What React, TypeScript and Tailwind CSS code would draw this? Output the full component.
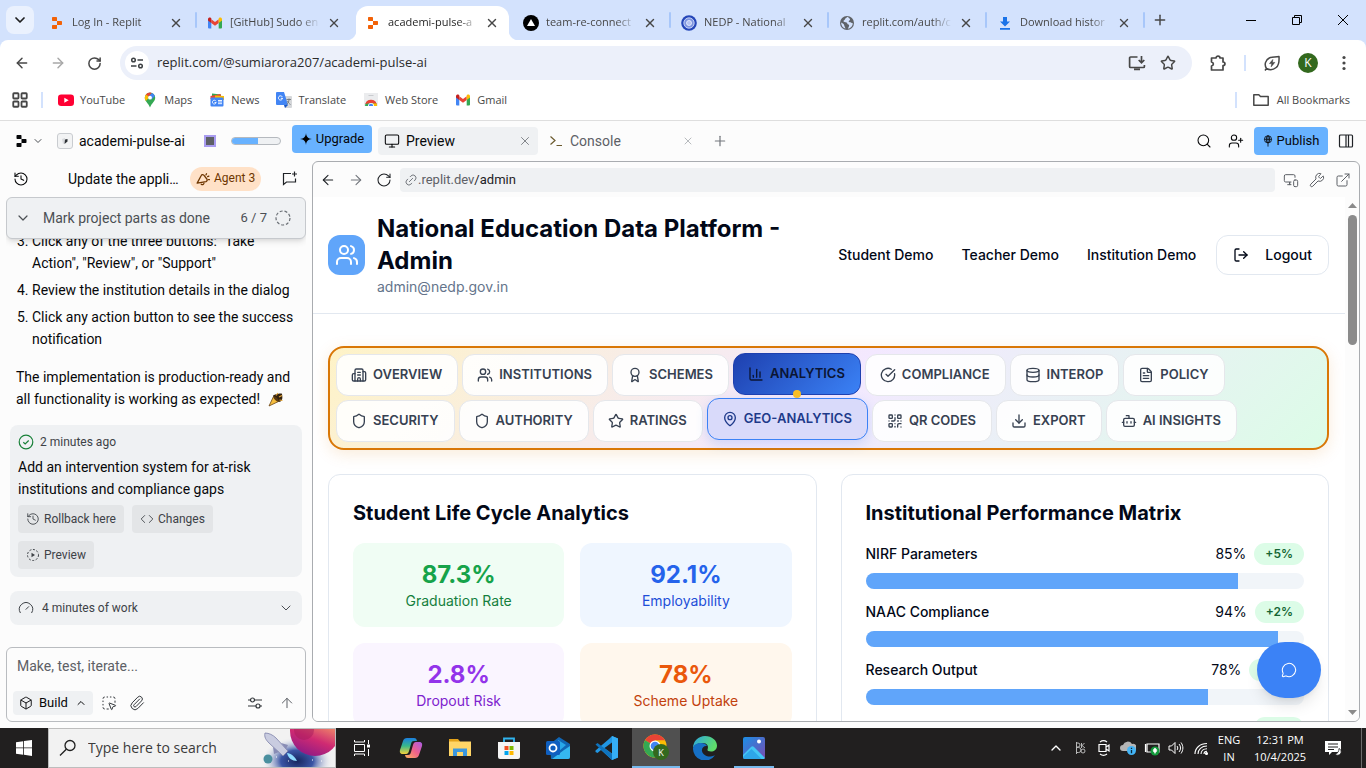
import React from "react";
import {
  ArrowLeft, ArrowRight, ArrowUp, Award, Bot, Box, Building2, ChartColumn, ChevronDown, ChevronUp,
  CircleCheckBig, Code, Database, Download, ExternalLink, FileText, Gauge, History, LayoutGrid, Link2,
  LogOut, MapPin, MessageCircle, Monitor, MonitorSmartphone, Paperclip, Plus, QrCode, RotateCw, Search, Shield,
  Star, SquareDashedMousePointer, UserPlus, Users, Wrench, X,
} from "lucide-react";

type SvgProps = { className?: string };

function ReplitLogo({ className }: SvgProps) {
  return (
    <svg viewBox="0 0 24 24" className={className} fill="currentColor" aria-hidden="true">
      <path d="M2 1.5A1.5 1.5 0 0 1 3.5 0h7A1.5 1.5 0 0 1 12 1.5V8H3.5A1.5 1.5 0 0 1 2 6.5ZM12 8h8.5A1.5 1.5 0 0 1 22 9.5v5a1.5 1.5 0 0 1-1.5 1.5H12ZM2 17.5A1.5 1.5 0 0 1 3.5 16H12v6.5a1.5 1.5 0 0 1-1.5 1.5h-7A1.5 1.5 0 0 1 2 22.5Z" />
    </svg>
  );
}

function GmailLogo() {
  return (
    <svg viewBox="0 0 16 16" className="size-4" aria-hidden="true">
      <path d="M1 4v8.500a1 1 0 0 0 1 1h2.300V6.500z" fill="#4285f4" />
      <path d="M15 4v8.500a1 1 0 0 1-1 1h-2.300V6.500z" fill="#34a853" />
      <path d="M4.300 4.200L8 7l3.700-2.800V8L8 10.700 4.300 8z" fill="#ea4335" />
      <path d="M1 4.300C1 2.700 2.700 2 4 3l.300.200V8L1 5.500z" fill="#c5221f" />
      <path d="M15 4.300C15 2.700 13.300 2 12 3l-.300.200V8L15 5.500z" fill="#fbbc04" />
    </svg>
  );
}

function VercelLogo() {
  return (
    <svg viewBox="0 0 16 16" className="size-4" aria-hidden="true">
      <circle cx="8" cy="8" r="8" />
      <path d="M8 4l4 7H4z" fill="#fff" />
    </svg>
  );
}

function EmblemLogo() {
  return (
    <svg viewBox="0 0 16 16" className="size-4" aria-hidden="true">
      <circle cx="8" cy="8" r="7.800" fill="#2546b8" />
      <circle cx="8" cy="8" r="5.200" fill="#7f95df" stroke="#dbe4ff" strokeWidth="0.800" />
      <circle cx="8" cy="8" r="2.500" fill="#b4c2f2" stroke="#eef2ff" strokeWidth="0.800" />
    </svg>
  );
}

function GlobeLogo() {
  return (
    <svg viewBox="0 0 16 16" className="size-4" aria-hidden="true">
      <circle cx="8" cy="8" r="7" fill="#5f6368" />
      <path d="M8.500 1.800c-1 1.200-2.200 1.200-2.500 2.500-.200 1-1.500.700-1.500 2 0 .900 2 .700 3 1.200 1.200.600.500 1.800 2 2 1.300.200.500 2.300-.700 4.300 2.700-.300 5-2.800 5-5.500-1.200-.300-1.800-1-3-1-1.300 0-1.500-1.300-.500-1.700 1-.300 1-1.500 0-2.300-.700-.600-1-1-1.800-1.500zM2.200 7.500c1 .500 2.500 1.200 2.800 2.200.300 1.200.800 2 1.500 3.800-2.500-.600-4.500-3-4.300-6z" fill="#d3e2fd" />
    </svg>
  );
}

function DownloadLogo() {
  return (
    <svg viewBox="0 0 16 16" className="size-4" fill="#1a73e8" aria-hidden="true">
      <path d="M6 2h4v4.500h3L8 11.500l-5-5h3zM3 13h10v1.700H3z" />
    </svg>
  );
}

function TuneIcon() {
  return (
    <svg viewBox="0 0 16 16" className="size-4" fill="none" stroke="#3c4043" strokeWidth="1.500" aria-hidden="true">
      <circle cx="4.500" cy="5" r="1.800" /><path d="M8.500 5H14M2 11h5.500" /><circle cx="11.500" cy="11" r="1.800" />
    </svg>
  );
}

function InstallIcon() {
  return (
    <svg viewBox="0 0 18 18" className="size-[18px]" fill="none" stroke="#474747" strokeWidth="1.700" aria-hidden="true">
      <path d="M9.500 3H2.600a1 1 0 0 0-1 1v8.500a1 1 0 0 0 1 1h12.800a1 1 0 0 0 1-1V11M13.500 2v6.500M10.700 6l2.800 2.800L16.300 6M6 15.300h6" />
    </svg>
  );
}

function PuzzleIcon() {
  return (
    <svg viewBox="0 0 18 18" className="size-[18px]" fill="none" stroke="#474747" strokeWidth="1.700" strokeLinejoin="round" aria-hidden="true">
      <path d="M2.500 4H7c0-2.500 4-2.500 4 0h3v4c2.600 0 2.600 3.500 0 3.500V16H2.500v-4c2.500-.500 2.500-3.500 0-4z" />
    </svg>
  );
}

function LeafIcon() {
  return (
    <svg viewBox="0 0 18 18" className="size-[18px]" fill="none" stroke="#474747" strokeWidth="1.500" strokeLinejoin="round" aria-hidden="true">
      <path d="M3.500 14.500C1 11 2.300 5.800 6.300 4 9 2.800 12.500 3.300 16 2.500c.300 4.500.100 8.500-2.800 11-2.900 2.400-7 2.500-9.700 1zm0 0L2 16.500" />
      <path d="M9.800 5.500L6.500 9.600h2.300l-.600 3.200 3.600-4.400H9.400z" fill="#474747" strokeWidth="0.600" />
    </svg>
  );
}

function YoutubeLogo() {
  return (
    <svg viewBox="0 0 16 16" className="size-4" aria-hidden="true">
      <rect y="2.500" width="16" height="11.500" rx="3.200" fill="#ff0033" /><path d="M6.300 5.700l4.400 2.500-4.400 2.500z" fill="#fff" />
    </svg>
  );
}

function MapsLogo() {
  return (
    <svg viewBox="0 0 16 16" className="size-4" aria-hidden="true">
      <path d="M8 .500A5.200 5.200 0 0 0 2.800 5.700c0 4 3.500 5 5.200 9.800 1.700-4.800 5.200-5.800 5.200-9.800A5.200 5.200 0 0 0 8 .500z" fill="#34a853" />
      <path d="M8 .500a5.200 5.200 0 0 0-4.100 2L6 5l4-4.100A5 5 0 0 0 8 .500z" fill="#ea4335" />
      <path d="M3.900 2.500a5.200 5.200 0 0 0-1.100 3.200c0 1.400.500 2.400 1.100 3.300L7.500 5z" fill="#fbbc04" />
      <path d="M10 .900a5.200 5.200 0 0 1 2.900 3L9.500 7.500 6.400 4.700z" fill="#4285f4" />
      <circle cx="8" cy="5.700" r="1.900" fill="#fff" />
    </svg>
  );
}

function NewsLogo() {
  return (
    <svg viewBox="0 0 16 16" className="size-4" aria-hidden="true">
      <path d="M3 1.500l9 1v4H3z" fill="#34a853" /><path d="M1.500 4l10-2 1 5h-11z" fill="#ea4335" /><path d="M6 3.500l9 .500v4H6z" fill="#fbbc04" />
      <rect x="1.500" y="5.500" width="13" height="9" rx="1" fill="#4285f4" />
      <path d="M7 9.200a1.900 1.900 0 1 0 .200 1.300H5.500M9 8.500h4M9 10h4M9 11.700h4" stroke="#fff" fill="none" strokeWidth="0.900" />
    </svg>
  );
}

function TranslateLogo() {
  return (
    <svg viewBox="0 0 16 16" className="size-4" aria-hidden="true">
      <path d="M6 4h9a1 1 0 0 1 1 1v10a1 1 0 0 1-1 1H9z" fill="#d5d7da" />
      <path d="M1 0h7l4 13H1a1 1 0 0 1-1-1V1a1 1 0 0 1 1-1z" fill="#4285f4" /><path d="M8 13h4l-3 3z" fill="#1a56c4" />
      <path d="M6.300 4.800a2.100 2.100 0 1 0 .300 1.500H4.800" stroke="#fff" fill="none" strokeWidth="1" />
      <path d="M10.500 7.500H15M13 6.500v1c0 2-1 4-2.500 5M11.500 9c.500 1.500 2 3 3 3.500" stroke="#72787f" fill="none" strokeWidth="0.900" />
    </svg>
  );
}

function WebStoreLogo() {
  return (
    <svg viewBox="0 0 16 16" className="size-4" aria-hidden="true">
      <path d="M1 1h14v13H1z" fill="#ebecee" /><path d="M5.500 3.500h5" stroke="#c9cbcf" />
      <path d="M2 14a6 6 0 0 1 12 0z" fill="#34a853" /><path d="M2.300 12A6 6 0 0 1 13.700 12L8 11z" fill="#ea4335" />
      <path d="M9 11.500h4.700A6 6 0 0 1 14 14H9z" fill="#fbbc04" /><path d="M5 14a3 3 0 0 1 6 0z" fill="#fff" /><path d="M5.800 14a2.200 2.200 0 0 1 4.400 0z" fill="#4285f4" />
    </svg>
  );
}

function FolderIcon() {
  return (
    <svg viewBox="0 0 16 16" className="size-4" fill="none" stroke="#474747" strokeWidth="1.500" strokeLinejoin="round" aria-hidden="true">
      <path d="M.800 13.200V2.800h5l1.700 1.700h7.700v8.700z" />
    </svg>
  );
}

const TABS: { title: string; icon: React.ReactNode; active?: boolean; divider?: boolean }[] = [
  { title: "Log In - Replit", icon: <ReplitLogo className="size-3 text-[#f26207]" />, divider: true },
  { title: "[GitHub] Sudo en", icon: <GmailLogo /> },
  { title: "academi-pulse-a", icon: <ReplitLogo className="size-3 text-[#f26207]" />, active: true },
  { title: "team-re-connect", icon: <VercelLogo />, divider: true },
  { title: "NEDP - National", icon: <EmblemLogo />, divider: true },
  { title: "replit.com/auth/c", icon: <GlobeLogo />, divider: true },
  { title: "Download histor", icon: <DownloadLogo />, divider: true },
];

function TabStrip() {
  return (
    <div className="flex h-10 shrink-0 bg-[#d3e2fd] pl-1.5">
      <button aria-label="Search tabs" className="mt-1.5 mr-1.5 flex size-7 items-center justify-center rounded-lg bg-[#eaf1fe]">
        <ChevronDown className="size-4 text-[#1f1f1f]" strokeWidth={2.6} />
      </button>
      {TABS.map((t) => (
        <div key={t.title} className="relative flex w-[158px] min-w-0 items-end">
          <div className={"flex h-[34px] w-[153px] items-center pr-[9px] pb-px pl-[9px] text-[11px] " + (t.active ? "rounded-t-xl bg-white" : "")}>
            <span className="flex w-4 shrink-0 justify-center">{t.icon}</span>
            <span className={"ml-[7px] min-w-0 flex-1 overflow-hidden whitespace-nowrap [mask-image:linear-gradient(to_right,#000_78%,transparent)] " + (t.active ? "text-[#1f1f1f]" : "text-[#474747]")}>
              {t.title}
            </span>
            <button aria-label={"Close " + t.title} className="ml-1.5 flex size-4 shrink-0 items-center justify-center">
              <X className="size-3.5 text-[#474747]" strokeWidth={2.4} />
            </button>
          </div>
          {t.active && (
            <>
              <span className="absolute bottom-0 -left-2.5 size-2.5 bg-[radial-gradient(circle_at_0_0,#d3e2fd_10px,#fff_11px)]" />
              <span className="absolute right-[-5px] bottom-0 size-2.5 bg-[radial-gradient(circle_at_100%_0,#d3e2fd_10px,#fff_11px)]" />
            </>
          )}
          {t.divider && <span className="mb-3 ml-0.5 h-4 w-0.5 rounded bg-[#a8c7fa]" />}
        </div>
      ))}
      <button aria-label="New tab" className="flex w-7 items-center justify-center">
        <Plus className="size-4 text-[#474747]" strokeWidth={2.2} />
      </button>
      <div className="ml-auto flex">
        <button aria-label="Minimize" className="flex w-[46px] items-center justify-center"><span className="h-px w-2.5 bg-black" /></button>
        <button aria-label="Restore" className="flex w-[46px] items-center justify-center">
          <svg viewBox="0 0 10 10" className="size-2.5" fill="none" stroke="#000"><path d="M.500 2.500h7v7h-7zM2.500 2.500v-2h7v7h-2" /></svg>
        </button>
        <button aria-label="Close" className="flex w-[46px] items-center justify-center">
          <svg viewBox="0 0 10 10" className="size-2.5" fill="none" stroke="#000"><path d="M0 0l10 10M10 0L0 10" /></svg>
        </button>
      </div>
    </div>
  );
}

function Toolbar() {
  return (
    <div className="shrink-0 bg-[#d3e2fd]">
      <div className="flex h-[46px] items-center rounded-t-lg bg-white">
        <div className="flex w-[112px] justify-around pl-1">
          <button aria-label="Back"><ArrowLeft className="size-4 text-[#474747]" strokeWidth={2.2} /></button>
          <button aria-label="Forward"><ArrowRight className="size-4 text-[#a8a8a8]" strokeWidth={2.2} /></button>
          <button aria-label="Reload"><RotateCw className="size-[15px] text-[#474747]" strokeWidth={2.4} /></button>
        </div>
        <div className="ml-2 flex h-[34px] min-w-0 flex-1 items-center rounded-full bg-[#ecf0fa] pr-4 pl-[5px]">
          <button aria-label="Site information" className="flex size-6 items-center justify-center rounded-full bg-white"><TuneIcon /></button>
          <input aria-label="Address" defaultValue="replit.com/@sumiarora207/academi-pulse-ai" className="ml-2 min-w-0 flex-1 bg-transparent text-[13px] text-[#2b2b2b] outline-none" />
          <button aria-label="Install" className="mr-3.5"><InstallIcon /></button>
          <button aria-label="Bookmark"><Star className="size-4 text-[#474747]" strokeWidth={2.2} /></button>
        </div>
        <button aria-label="Extensions" className="ml-[17px]"><PuzzleIcon /></button>
        <span className="ml-[17px] h-4 w-0.5 bg-[#d3e2fd]" />
        <button aria-label="Energy saver" className="ml-[17px]"><LeafIcon /></button>
        <button className="ml-[17px] flex size-5 items-center justify-center rounded-full bg-[#33691e] text-xs text-white">K</button>
        <button aria-label="Menu" className="mr-3 ml-4 flex w-5 items-center justify-center">
          <svg viewBox="0 0 4 16" className="h-4 w-1" fill="#474747"><circle cx="2" cy="2.500" r="1.600" /><circle cx="2" cy="8" r="1.600" /><circle cx="2" cy="13.500" r="1.600" /></svg>
        </button>
      </div>
    </div>
  );
}

function Bookmarks() {
  const items: [string, React.ReactNode][] = [
    ["YouTube", <YoutubeLogo key="i" />], ["Maps", <MapsLogo key="i" />], ["News", <NewsLogo key="i" />],
    ["Translate", <TranslateLogo key="i" />], ["Web Store", <WebStoreLogo key="i" />], ["Gmail", <GmailLogo key="i" />],
  ];
  return (
    <nav className="flex h-[35px] shrink-0 items-center border-b border-[#dedede] bg-white pb-1.5 pl-[11px] text-[11px] text-[#474747]">
      <button aria-label="Apps"><LayoutGrid className="size-[18px]" strokeWidth={2.4} /></button>
      <span className="mr-[15px] ml-3 h-4 w-0.5 bg-[#d3e2fd]" />
      <div className="flex gap-[17px]">
        {items.map(([n, icon]) => (
          <a key={n} href="#" className="flex items-center gap-1.5">{icon}{n}</a>
        ))}
      </div>
      <span className="mr-4 ml-auto h-4 w-0.5 bg-[#d3e2fd]" />
      <a href="#" className="mr-4 flex items-center gap-2"><FolderIcon />All Bookmarks</a>
    </nav>
  );
}

function AppHeader() {
  return (
    <header className="flex h-10 shrink-0 items-center text-sm text-[#07080a]">
      <button aria-label="Replit menu" className="ml-[15px] flex items-center gap-1">
        <ReplitLogo className="h-3 w-[13px]" />
        <ChevronDown className="size-3 text-[#4b4f54]" />
      </button>
      <span className="ml-[13px] flex size-4 items-center justify-center rounded-[3px] border border-[#c9ccd0] bg-[#f2f3f4]">
        <svg viewBox="0 0 8 8" className="size-2"><path d="M1 2l3-1v5L2 7z" fill="#d8dadd" /><path d="M4 2.500L6.500 2v2.500L3.500 7z" fill="#2b2f33" /></svg>
      </span>
      <span className="ml-1.5 w-[111px] whitespace-nowrap">academi-pulse-ai</span>
      <button aria-label="Stop" className="ml-3.5 size-3 border-2 border-[#a99cf0] bg-[#5d6066]" />
      <span className="ml-[15px] h-2 w-[50px] overflow-hidden rounded-full border border-[#b5b9be] bg-[#eff1f3]">
        <span className="block h-full w-[55%] bg-[#68b2ff]" />
      </span>
      <button className="mb-1 ml-[11px] flex h-7 w-20 items-center justify-center gap-1 rounded bg-[#68b2ff] text-[13px]">
        <svg viewBox="0 0 12 12" className="size-3"><path d="M6 0c.400 4 2 5.600 6 6-4 .400-5.600 2-6 6-.400-4-2-5.600-6-6 4-.400 5.600-2 6-6z" /></svg>
        Upgrade
      </button>
      <div className="ml-1.5 flex h-7 w-40 items-center rounded bg-[#eff1f3] px-1.5">
        <Monitor className="size-4" strokeWidth={1.6} />
        <span className="ml-1.5">Preview</span>
        <button aria-label="Close Preview" className="ml-auto"><X className="size-3.5 text-[#72767c]" strokeWidth={1.5} /></button>
      </div>
      <div className="flex h-7 w-40 items-center pr-1 pl-3 text-[#5d6066]">
        <svg viewBox="0 0 12 12" className="size-3" fill="none" stroke="#6b5a2e" strokeWidth="1.200"><path d="M.500 1.500L5 5.500l-4.500 4M6.500 10.500H12" /></svg>
        <span className="ml-2">Console</span>
        <button aria-label="Close Console" className="ml-auto"><X className="size-3 text-[#a0a4a8]" strokeWidth={1.5} /></button>
      </div>
      <button aria-label="New pane" className="ml-3.5"><Plus className="size-4 text-[#72767c]" strokeWidth={1.8} /></button>
      <div className="mr-3 ml-auto flex items-center">
        <button aria-label="Search"><Search className="size-4" strokeWidth={1.6} /></button>
        <button aria-label="Invite" className="ml-4"><UserPlus className="size-4" strokeWidth={1.6} /></button>
        <button className="ml-2.5 flex h-7 w-[74px] items-center justify-center gap-1 rounded bg-[#68b2ff] text-[13px]">
          <svg viewBox="0 0 12 14" className="h-3 w-2.5" fill="none" stroke="#07080a"><circle cx="6" cy="5" r="4.300" /><ellipse cx="6" cy="5" rx="2" ry="4.300" /><path d="M1.700 5h8.600M6 .700v13" /></svg>
          Publish
        </button>
        <button aria-label="Toggle panel" className="ml-2.5">
          <svg viewBox="0 0 16 16" className="size-4" fill="none" stroke="#1f2226" strokeWidth="1.200"><rect x="1.500" y="2" width="13" height="12" rx="1" /><path d="M8 2v12M10.500 2v12" /></svg>
        </button>
      </div>
    </header>
  );
}

function AgentPanel() {
  const chip = "flex h-7 items-center gap-1 rounded bg-[#e3e5e7] px-2 text-[12px] text-[#3e4247]";
  return (
    <aside className="flex w-[312px] shrink-0 flex-col px-1.5 text-[#07080a]">
      <div className="flex h-9 shrink-0 items-center pl-[7px] text-sm">
        <button aria-label="History"><History className="size-4" strokeWidth={1.6} /></button>
        <span className="ml-[39px] w-[116px] truncate">Update the application</span>
        <span className="ml-1.5 flex h-6 items-center gap-1 rounded-full bg-[#ffe1c7] px-1.5 text-[12px] text-[#6e3600]">
          <svg viewBox="0 0 12 12" className="size-3.5" fill="none" stroke="currentColor" strokeWidth="1.100" strokeLinecap="round" strokeLinejoin="round"><path d="M1 9.500L4.500 3c.500-1 1.500-1 2.200-.300L9.300 6c.600 1 .300 1.800-.700 2.200zM4.500 10.500c1 .800 2 .300 2.300-.800M9 1.500l-.500 1M11 3.500l-1 .500M10.700 6.500h.800" /></svg>
          Agent 3
        </span>
        <button aria-label="New chat" className="mr-2 ml-auto">
          <svg viewBox="0 0 16 16" className="size-4" fill="none" stroke="#1f2226" strokeWidth="1.200"><path d="M9 2.500H1.500v11l3-2.500h9V7.500M12.500.500v5M10 3h5" /></svg>
        </button>
      </div>

      <div className="relative flex min-h-0 flex-1 flex-col justify-end overflow-hidden">
        <button className="absolute inset-x-0 top-0 z-10 flex h-[42px] items-center rounded-md border border-[#c6c9cd] bg-[#eff1f3] pr-3.5 pl-2 text-sm text-[#4b4f54] shadow-md">
          <ChevronDown className="size-4" strokeWidth={1.8} />
          <span className="ml-3">Mark project parts as done</span>
          <span className="ml-auto text-[13px]">6 / 7</span>
          <svg viewBox="0 0 16 16" className="ml-2 size-4 shrink-0" fill="none" stroke="#6b7076" strokeWidth="1.200" strokeDasharray="3 1.900"><circle cx="8" cy="8" r="7" /></svg>
        </button>
        <div className="pb-[22px]">
          <ol start={3} className="ml-[26px] list-decimal space-y-[5px] text-sm leading-[22px]">
            <li>Click any of the three buttons: "Take<br />Action", "Review", or "Support"</li>
            <li>Review the institution details in the dialog</li>
            <li>Click any action button to see the success notification</li>
          </ol>
          <p className="mt-4 ml-2.5 text-sm leading-[22px]">
            The implementation is production-ready and<br />all functionality is working as expected!{" "}
            <svg viewBox="0 0 16 16" className="ml-1 inline size-4 align-text-bottom" role="img" aria-label="party">
              <path d="M1 15L5.500 5.500l5 5z" fill="#f5bd3d" stroke="#6b4516" strokeWidth="0.800" />
              <path d="M5 5c1-2 9-3 9-2s2 7-3 8z" fill="#35230f" />
              <path d="M5.500 5.500c1-1.500 6.500 3.500 5 5-1.500 1-6-3.500-5-5z" fill="#5a3a12" />
              <path d="M8 4.500l2-2.500M11 6l3-1.500M11.500 9l3 .500" stroke="#e8a93a" strokeWidth="1.100" fill="none" />
            </svg>
          </p>
          <section className="mx-1 mt-[15px] rounded-lg bg-[#eff1f3] p-2">
            <div className="flex items-center gap-1.5 text-[12px] leading-[18px] text-[#3e4247]">
              <svg viewBox="0 0 16 16" className="size-4" fill="none" stroke="#188038" strokeWidth="1.200"><circle cx="8" cy="8" r="6.800" /><path d="M5.300 8.200l1.900 1.800 3.500-3.500" /></svg>
              2 minutes ago
            </div>
            <p className="mt-[5px] text-sm leading-[22px]">Add an intervention system for at-risk institutions and compliance gaps</p>
            <div className="mt-[5px] flex flex-wrap gap-2">
              <button className={chip}><History className="size-3.5" strokeWidth={1.5} />Rollback here</button>
              <button className={chip}><Code className="size-3.5" strokeWidth={1.5} />Changes</button>
              <button className={chip}>
                <svg viewBox="0 0 14 14" className="size-3.5" fill="none" stroke="currentColor" strokeDasharray="2 1.600"><circle cx="7" cy="7" r="5.500" /><path d="M5.500 4.800L9 7 5.500 9.200z" fill="currentColor" stroke="none" /></svg>
                Preview
              </button>
            </div>
          </section>
          <button className="mx-1 mt-3.5 flex h-[34px] w-[292px] items-center gap-2 rounded-lg bg-[#eff1f3] px-2 text-[12px] text-[#3e4247]">
            <Gauge className="size-4" strokeWidth={1.5} />4 minutes of work
            <ChevronDown className="ml-auto size-4" strokeWidth={1.4} />
          </button>
        </div>
      </div>

      <div className="mb-1.5 flex h-[75px] w-[300px] shrink-0 flex-col justify-between rounded-md border border-[#b9bcc0] bg-[#fcfcfc] p-1.5">
        <textarea aria-label="Message" placeholder="Make, test, iterate..." rows={1} className="resize-none bg-transparent px-1 pt-0.5 text-sm outline-none placeholder:text-[#5d6066]" />
        <div className="flex h-6 items-center text-[#33373b]">
          <button className="flex h-6 w-20 items-center rounded bg-[#eff1f3] px-1.5 text-[13px] text-[#07080a]">
            <Box className="size-3.5" strokeWidth={1.6} /><span className="ml-1.5">Build</span><ChevronUp className="ml-auto size-3" />
          </button>
          <button aria-label="Select element" className="ml-2"><SquareDashedMousePointer className="size-4" strokeWidth={1.5} /></button>
          <button aria-label="Attach" className="ml-3"><Paperclip className="size-4" strokeWidth={1.5} /></button>
          <button aria-label="Settings" className="mr-4 ml-auto">
            <svg viewBox="0 0 16 16" className="size-4" fill="none" stroke="currentColor" strokeWidth="1.200"><path d="M1 5h2.500M7.500 5H15M1 11h8M13 11h2" /><circle cx="5.500" cy="5" r="2" /><circle cx="11" cy="11" r="2" /></svg>
          </button>
          <button aria-label="Send" className="mr-1"><ArrowUp className="size-4 text-[#5d6066]" strokeWidth={1.5} /></button>
        </div>
      </div>
    </aside>
  );
}

const NAV = [
  { label: "OVERVIEW", Icon: Building2 }, { label: "INSTITUTIONS", Icon: Users }, { label: "SCHEMES", Icon: Award },
  { label: "ANALYTICS", Icon: ChartColumn }, { label: "COMPLIANCE", Icon: CircleCheckBig }, { label: "INTEROP", Icon: Database },
  { label: "POLICY", Icon: FileText }, { label: "SECURITY", Icon: Shield }, { label: "AUTHORITY", Icon: Shield },
  { label: "RATINGS", Icon: Star }, { label: "GEO-ANALYTICS", Icon: MapPin }, { label: "QR CODES", Icon: QrCode },
  { label: "EXPORT", Icon: Download }, { label: "AI INSIGHTS", Icon: Bot },
];

function DashboardNav() {
  return (
    <nav className="flex flex-wrap gap-1 rounded-2xl border-2 border-[#d97706] bg-[linear-gradient(135deg,#fef3c7_0%,#f3e8ff_50%,#dcfce7_100%)] p-1.5 shadow-[0_4px_16px_rgba(217,119,6,0.15)]">
      {NAV.map(({ label, Icon }) => {
        const base = "relative flex h-[42px] items-center gap-1.5 rounded-xl border pr-[15px] pl-3.5 text-[13px] font-semibold ";
        const look =
          label === "ANALYTICS"
            ? "-mt-px mb-px border-[#1e40af] bg-[linear-gradient(135deg,#1e40af,#3b82f6)] text-[#0b1533]"
            : label === "GEO-ANALYTICS"
              ? "-mt-0.5 mb-0.5 border-[#3b82f6] bg-[#d9dafa] text-[#1e3a8a] shadow-[0_4px_12px_rgba(59,130,246,0.2)]"
              : "border-[#e5e7eb] bg-white/90 text-[#374151]";
        return (
          <button key={label} className={base + look}>
            <Icon className="size-4" />
            {label}
            {label === "ANALYTICS" && <span className="absolute -bottom-1 left-1/2 size-2 -translate-x-1/2 rounded-full bg-[#fbbf24]" />}
          </button>
        );
      })}
    </nav>
  );
}

const STATS = [
  { value: "87.3%", label: "Graduation Rate", box: "bg-[#f0fdf4]", v: "text-[#16a34a]", l: "text-[#15803d]" },
  { value: "92.1%", label: "Employability", box: "bg-[#eff6ff]", v: "text-[#2563eb]", l: "text-[#1d4ed8]" },
  { value: "2.8%", label: "Dropout Risk", box: "bg-[#faf5ff]", v: "text-[#9333ea]", l: "text-[#7e22ce]" },
  { value: "78%", label: "Scheme Uptake", box: "bg-[#fff7ed]", v: "text-[#ea580c]", l: "text-[#c2410c]" },
];

const METRICS = [
  { name: "NIRF Parameters", value: 85, delta: "+5%" },
  { name: "NAAC Compliance", value: 94, delta: "+2%" },
  { name: "Research Output", value: 78, delta: "+12%" },
  { name: "Industry Linkage", value: 72, delta: "+8%" },
];

function Dashboard() {
  return (
    <div className="min-w-0 flex-1 overflow-hidden bg-white font-['Inter','Liberation_Sans',sans-serif] text-[#020817]">
      <header className="flex items-center border-b border-[#e2e8f0] py-4 pr-4 pl-[15px] text-sm">
        <span className="flex h-10 w-[37px] shrink-0 items-center justify-center rounded-xl bg-[#60a5fa] text-white"><Users className="size-6" /></span>
        <div className="ml-3 min-w-0 flex-1">
          <h1 className="text-2xl font-bold">National Education Data Platform - Admin</h1>
          <p className="text-[#64748b]">admin@nedp.gov.in</p>
        </div>
        <div className="ml-6 flex shrink-0 items-center gap-2 font-medium">
          <a href="#" className="px-2.5">Student Demo</a>
          <a href="#" className="px-2.5">Teacher Demo</a>
          <a href="#" className="px-2.5">Institution Demo</a>
          <button className="ml-0.5 flex h-10 items-center gap-4 rounded-xl border border-[#e2e8f0] px-4"><LogOut className="size-4" />Logout</button>
        </div>
      </header>
      <main className="pt-8 pr-4 pl-[15px]">
        <DashboardNav />
        <div className="mt-6 grid grid-cols-2 gap-6">
          <section className="rounded-xl border border-[#e2e8f0] p-6">
            <h2 className="text-xl font-bold">Student Life Cycle Analytics</h2>
            <div className="mt-4 grid grid-cols-2 gap-4 text-center">
              {STATS.map((s) => (
                <div key={s.label} className={"rounded-xl p-4 " + s.box}>
                  <div className={"text-2xl font-bold " + s.v}>{s.value}</div>
                  <div className={"text-sm " + s.l}>{s.label}</div>
                </div>
              ))}
            </div>
          </section>
          <section className="rounded-xl border border-[#e2e8f0] p-6">
            <h2 className="text-xl font-bold">Institutional Performance Matrix</h2>
            <div className="mt-4 space-y-3">
              {METRICS.map((m) => (
                <div key={m.name}>
                  <div className="flex h-[22px] items-center text-sm">
                    <span className="font-medium">{m.name}</span>
                    <span className="ml-auto">{m.value}%</span>
                    <span className="ml-2 flex h-[22px] items-center rounded-full bg-[#dcfce7] px-[11px] text-xs font-semibold text-[#166534]">{m.delta}</span>
                  </div>
                  <div className="mt-2 h-4 overflow-hidden rounded-full bg-[#f1f5f9]">
                    <div className="h-full bg-[#60a5fa]" style={{ width: `${m.value}%` }} />
                  </div>
                </div>
              ))}
            </div>
          </section>
        </div>
      </main>
    </div>
  );
}

function PreviewPane() {
  return (
    <div className="relative mr-1.5 mb-1.5 flex min-w-0 flex-1 flex-col overflow-hidden rounded-md border border-[#a9acb0]">
      <div className="flex h-[35px] shrink-0 items-center pl-[7px] text-[#1f2226]">
        <button aria-label="Back" className="flex w-4 justify-center"><ArrowLeft className="size-4" strokeWidth={1.6} /></button>
        <button aria-label="Forward" className="ml-3 flex w-4 justify-center"><ArrowRight className="size-4 text-[#72767c]" strokeWidth={1.6} /></button>
        <button aria-label="Reload" className="ml-3 flex w-4 justify-center"><RotateCw className="size-4" strokeWidth={1.6} /></button>
        <div className="ml-2 flex h-6 min-w-0 flex-1 items-center rounded bg-[#eff1f3] px-1 text-[13px]">
          <Link2 className="size-3.5 -rotate-45 text-[#72767c]" strokeWidth={1.6} />
          <span className="text-[#5d6066]">.replit.dev</span><span>/admin</span>
        </div>
        <div className="flex gap-2.5 px-2 text-[#5d6066]">
          <button aria-label="Devices"><MonitorSmartphone className="size-4" strokeWidth={1.5} /></button>
          <button aria-label="Tools"><Wrench className="size-4" strokeWidth={1.5} /></button>
          <button aria-label="Open in new tab"><ExternalLink className="size-4" strokeWidth={1.5} /></button>
        </div>
      </div>
      <div className="flex min-h-0 flex-1">
        <Dashboard />
        <div className="flex w-3.5 shrink-0 flex-col items-center justify-between bg-[#fcfcfc] py-1.5">
          <svg viewBox="0 0 9 5" className="h-[5px] w-[9px]" fill="#8a8a8a"><path d="M4.500 0L9 5H0z" /></svg>
          <span className="mt-[7px] mb-auto h-[130px] w-[9px] rounded-full bg-[#8b8b8b]" />
          <svg viewBox="0 0 9 5" className="h-[5px] w-[9px]" fill="#8a8a8a"><path d="M4.500 5L0 0h9z" /></svg>
        </div>
      </div>
      <button aria-label="Open chat" className="absolute right-[38px] bottom-[23px] flex h-14 w-16 items-center justify-center rounded-full bg-[#3b82f6] text-white shadow-lg">
        <MessageCircle className="size-4" strokeWidth={1.6} />
      </button>
    </div>
  );
}

function SearchArt() {
  return (
    <svg viewBox="0 0 76 38" className="h-full w-[76px]" aria-hidden="true">
      <defs>
        <radialGradient id="sky"><stop offset="0" stopColor="#16265f" /><stop offset="0.450" stopColor="#3a55a5" /><stop offset="1" stopColor="#f2f2f2" stopOpacity="0" /></radialGradient>
        <linearGradient id="planet" x1="0.700" y1="0" x2="0.300" y2="1"><stop offset="0.300" stopColor="#f08a68" /><stop offset="0.650" stopColor="#cf2a72" /><stop offset="1" stopColor="#8c1a86" /></linearGradient>
      </defs>
      <ellipse cx="38" cy="32" rx="36" ry="24" fill="url(#sky)" />
      <circle cx="56" cy="2" r="25" fill="url(#planet)" />
      <circle cx="45" cy="1" r="10" fill="#a51c5c" opacity="0.500" />
      <circle cx="9" cy="30" r="4.500" fill="#4a8f9f" />
      <path d="M6 4c4 0 8 2 11 5l12 13-5 5L10 14C7 11 5 8 6 4z" fill="#c9cce0" stroke="#7c80a8" strokeWidth="0.800" />
      <path d="M14 18l1 7 5-2zM22 14l7 2-2 4z" fill="#888cb5" />
      <path d="M28 24c4 0 8 4 10 8-5 0-9-3-10-8z" fill="#8fdcff" />
      <path d="M17 28h1M29 32h1M53 31h1M62 32h1" stroke="#fff" />
    </svg>
  );
}

function ChromeBadge() {
  return (
    <svg viewBox="0 0 28 28" className="size-7" aria-hidden="true">
      <circle cx="13" cy="13" r="11.500" fill="#fbbc04" />
      <path d="M13 13L3 7.300A11.500 11.500 0 0 1 23 7.300H13z" fill="#ea4335" />
      <path d="M3 7.300A11.500 11.500 0 0 0 13 24.500l5-8.500-5-3z" fill="#34a853" />
      <circle cx="13" cy="13" r="5.500" fill="#fff" /><circle cx="13" cy="13" r="4.300" fill="#4285f4" />
      <circle cx="19" cy="19" r="8" fill="#33691e" />
      <text x="19" y="22.500" textAnchor="middle" fontSize="9" fill="#fff">K</text>
    </svg>
  );
}

const TASKS: { name: string; icon: React.ReactNode; look?: string }[] = [
  { name: "Task View", icon: <svg viewBox="0 0 18 18" className="size-[18px]" fill="none" stroke="#fff"><path d="M1.500 5.500h10v7h-10zM1.500 1v2h10V1M1.500 17v-2h10v2M15.500 1v4M15.500 10v7" /><path d="M14 5.500h3v3h-3z" fill="#fff" stroke="none" /></svg> },
  { name: "Copilot", icon: <svg viewBox="0 0 24 24" className="size-6"><defs><linearGradient id="cpa" x1="0" y1="0" x2="0" y2="1"><stop offset="0" stopColor="#1c7fe0" /><stop offset="0.500" stopColor="#38b98a" /><stop offset="1" stopColor="#f6d23b" /></linearGradient><linearGradient id="cpb" x1="1" y1="0" x2="0" y2="1"><stop offset="0" stopColor="#a95be8" /><stop offset="0.500" stopColor="#f0618a" /><stop offset="1" stopColor="#ffb35c" /></linearGradient></defs><path d="M8 2h7c2 0 2.500 1 3 3h-3c-2 0-2.500 1-3 3l-2 7c-.500 2-1.500 3-3 3H4c-3 0-3.500-2-3-4L4 5c.600-2 2-3 4-3z" fill="url(#cpa)" /><path d="M16 22H9c-2 0-2.500-1-3-3h3c2 0 2.500-1 3-3l2-7c.500-2 1.500-3 3-3h3c3 0 3.500 2 3 4l-3 9c-.600 2-2 3-4 3z" fill="url(#cpb)" /></svg> },
  { name: "File Explorer", icon: <svg viewBox="0 0 24 24" className="size-6"><path d="M1 3h9l2 2.500V8H1z" fill="#e3a21a" /><path d="M1 5.500h22V20H1z" fill="#ffd567" /><path d="M5 20v-7.500h14V20h-4v-4H9v4z" fill="#3c97dd" /></svg> },
  { name: "Microsoft Store", icon: <svg viewBox="0 0 24 24" className="size-6"><path d="M7 7V2.500h10V7" fill="none" stroke="#30b4ef" strokeWidth="1.800" /><path d="M1 6h22v15a2 2 0 0 1-2 2H3a2 2 0 0 1-2-2z" fill="#f5f5f5" /><path d="M7.500 10h4v4h-4z" fill="#f25022" /><path d="M12.500 10h4v4h-4z" fill="#7fba00" /><path d="M7.500 15h4v4h-4z" fill="#00a4ef" /><path d="M12.500 15h4v4h-4z" fill="#ffb900" /></svg> },
  { name: "Outlook", icon: <svg viewBox="0 0 24 24" className="size-6"><path d="M4 8l9-7 11 7v13a2 2 0 0 1-2 2H5z" fill="#1066b5" /><path d="M24 10v11a2 2 0 0 1-2 2H6l12-9z" fill="#35b8f1" /><path d="M12 4l8 5-7 6z" fill="#28a8ea" /><rect y="5" width="14" height="14" rx="1.500" fill="#0f5fc0" /><circle cx="7" cy="12" r="3.500" fill="none" stroke="#fff" strokeWidth="1.800" /></svg> },
  { name: "Visual Studio Code", icon: <svg viewBox="0 0 24 24" className="size-6"><path d="M17 0l6 2.500v19L17 24 6 14l-3.500 3L.500 16v-1.500L14 3z" fill="#2196e3" /><path d="M.500 8.500L2.500 7 17 18v6z" fill="#0f73bd" /><path d="M17 6.500v11L9.500 12z" fill="#211f1f" /><path d="M17 0l6 2.500v19L17 24z" fill="#35aef5" /></svg> },
  { name: "Google Chrome", icon: <ChromeBadge />, look: "bg-[#505050] border-b-2 border-[#76b9ed]" },
  { name: "Microsoft Edge", icon: <svg viewBox="0 0 24 24" className="size-6"><defs><linearGradient id="edg" x1="0" y1="0" x2="1" y2="0.400"><stop offset="0" stopColor="#2aa6e4" /><stop offset="1" stopColor="#5fdc6a" /></linearGradient></defs><path d="M0 12A12 12 0 0 1 12 0c7 0 12 4.500 12 9.500 0 4-3 6-6 6-2.500 0-4-1-3.500-2C16 10 14 7 10 7 5 7 1 9 0 12z" fill="url(#edg)" /><path d="M0 12c1-3.500 4-5 8-5 3 0 5 1 6 3-3-.500-5.500 2-5 5 .600 3.500 5 6 9 5.500 1.500-.200 2.500-.700 4-1.300A12 12 0 0 1 0 12z" fill="#1670c5" /></svg> },
  { name: "Photos", icon: <svg viewBox="0 0 24 24" className="size-6"><defs><linearGradient id="pho" x1="0" y1="0" x2="1" y2="1"><stop offset="0" stopColor="#1b8fe6" /><stop offset="1" stopColor="#7a4bb0" /></linearGradient></defs><rect x="1" y="1" width="22" height="22" rx="2" fill="url(#pho)" /><path d="M1 19l8-8c1-1 2-1 3 0l11 11-1 1H3a2 2 0 0 1-2-2z" fill="#43c6f5" /><path d="M1 21L9.500 13l10 10H3a2 2 0 0 1-2-2z" fill="#1a86dd" opacity="0.500" /><circle cx="17" cy="5.500" r="2" fill="#fff" /></svg>, look: "after:absolute after:inset-x-1 after:bottom-0 after:h-0.5 after:bg-[#76b9ed]" },
];

function Taskbar() {
  return (
    <footer className="flex h-10 shrink-0 bg-[#211f1f] text-white">
      <button aria-label="Start" className="flex w-12 items-center justify-center">
        <svg viewBox="0 0 16 16" className="size-4" fill="#fff"><path d="M0 2.200l7.200-1v6.300H0zM8 1.100L16 0v7.500H8zM0 8.300h7.200v6.400L0 13.700zM8 8.300h8V16l-8-1.200z" /></svg>
      </button>
      <label className="flex w-72 shrink-0 items-center border border-[#bdbdbd] bg-[#f2f2f2] text-[#2b2b2b]">
        <svg viewBox="0 0 18 18" className="ml-2.5 size-[18px] shrink-0" fill="none" stroke="#1f1f1f" strokeWidth="1.300"><circle cx="11" cy="6.500" r="5" /><path d="M7.300 10.200L1 16.500" /></svg>
        <input aria-label="Search" placeholder="Type here to search" className="ml-[11px] min-w-0 flex-1 bg-transparent text-sm outline-none placeholder:text-[#3b3b3b]" />
        <SearchArt />
      </label>
      <div className="ml-0.5 flex gap-px">
        {TASKS.map((t) => (
          <button key={t.name} aria-label={t.name} className={"relative flex w-12 items-center justify-center " + (t.look ?? "")}>{t.icon}</button>
        ))}
      </div>
      <div className="ml-auto flex items-center text-[11px] leading-[17px]">
        <div className="mr-2 flex gap-2">
          <ChevronUp className="size-4" strokeWidth={2} />
          <svg viewBox="0 0 16 16" className="size-4" fill="none" stroke="#b8b8b8"><path d="M4.500 2v12M4.500 3h1.500a2 2 0 0 1 0 4H4.500M4.500 7.500h2a2.500 2.500 0 0 1 0 5h-2M9.500 3v5M9.500 6l3-3M10 5.500l3 2.500" /><circle cx="11" cy="11" r="2" /></svg>
          <svg viewBox="0 0 16 16" className="size-4" fill="none" stroke="#fff" strokeWidth="1.200"><path d="M3 4.500h7v7H3zM10 7l3-2v6l-3-2M4 2c2-1.500 5-1.500 7 0M4 14c2 1.500 5 1.500 7 0" /></svg>
          <svg viewBox="0 0 16 16" className="size-4"><path d="M3 11a3 3 0 0 1 0-6 5 5 0 0 1 9-1 3.500 3.500 0 0 1 2 7z" fill="#b5b5b5" /><circle cx="11.500" cy="10.500" r="4.500" fill="#44b4f5" /><path d="M11.500 7.700v1.300M11.500 10v3.300" stroke="#0b2a3c" strokeWidth="1.300" /></svg>
          <svg viewBox="0 0 16 16" className="size-4"><path d="M1.500 4v8M3 4h12v8H3z" fill="none" stroke="#fff" strokeWidth="1.200" /><circle cx="11" cy="11" r="4.500" fill="#149b3c" /><path d="M11 8c3 2 1.500 4.500 0 4.500S8 10 11 8zM11 12v2" stroke="#fff" fill="#fff" strokeWidth="0.600" /></svg>
          <svg viewBox="0 0 16 16" className="size-4" fill="none" stroke="#fff"><path d="M1 6h2.500L7 2.500v11L3.500 10H1zM9 6c1 1.200 1 2.800 0 4M11 4c2 2.500 2 5.500 0 8M13 2.500c2.500 3.500 2.500 7.500 0 11" /></svg>
          <svg viewBox="0 0 16 16" className="ml-px size-4" fill="none" stroke="#fff" strokeWidth="1.100"><path d="M2 14C2 8 7 3.500 14 3.500M5 14c0-4.500 3.500-8 9-8M8 14c0-3 2.500-5.300 6-5.300M11 14c0-1.500 1.300-2.700 3-2.700" /><circle cx="13.500" cy="13.500" r="1" fill="#fff" /></svg>
        </div>
        <div className="w-6 text-center"><div>ENG</div><div>IN</div></div>
        <div className="ml-3 w-[54px] text-center whitespace-nowrap"><div>12:31 PM</div><div>10/4/2025</div></div>
        <button aria-label="Notifications" className="mr-[18px] ml-4 flex w-5 justify-center">
          <svg viewBox="0 0 18 18" className="size-[18px]"><path d="M1 2h16v11h-9l-3 3v-3H1z" fill="#fff" /><path d="M4 5h10M4 8h10M4 10.500h6" stroke="#211f1f" /><path d="M15 9.500a3.500 3.500 0 1 1-4 5.500c2.500 0 4-2.500 4-5.500z" fill="#fff" stroke="#211f1f" strokeWidth="0.800" /></svg>
        </button>
        <span className="mr-1 h-full w-px bg-[#6b6b6b]" />
      </div>
    </footer>
  );
}

export default function App() {
  return (
    <div className="flex h-screen flex-col overflow-hidden bg-[#fcfcfc] font-['Open_Sans','Noto_Sans',sans-serif] text-[12px]">
      <TabStrip />
      <Toolbar />
      <Bookmarks />
      <div className="flex min-h-0 flex-1 flex-col font-['Roboto','Liberation_Sans',sans-serif]">
        <AppHeader />
        <div className="flex min-h-0 flex-1">
          <AgentPanel />
          <PreviewPane />
        </div>
      </div>
      <Taskbar />
    </div>
  );
}
